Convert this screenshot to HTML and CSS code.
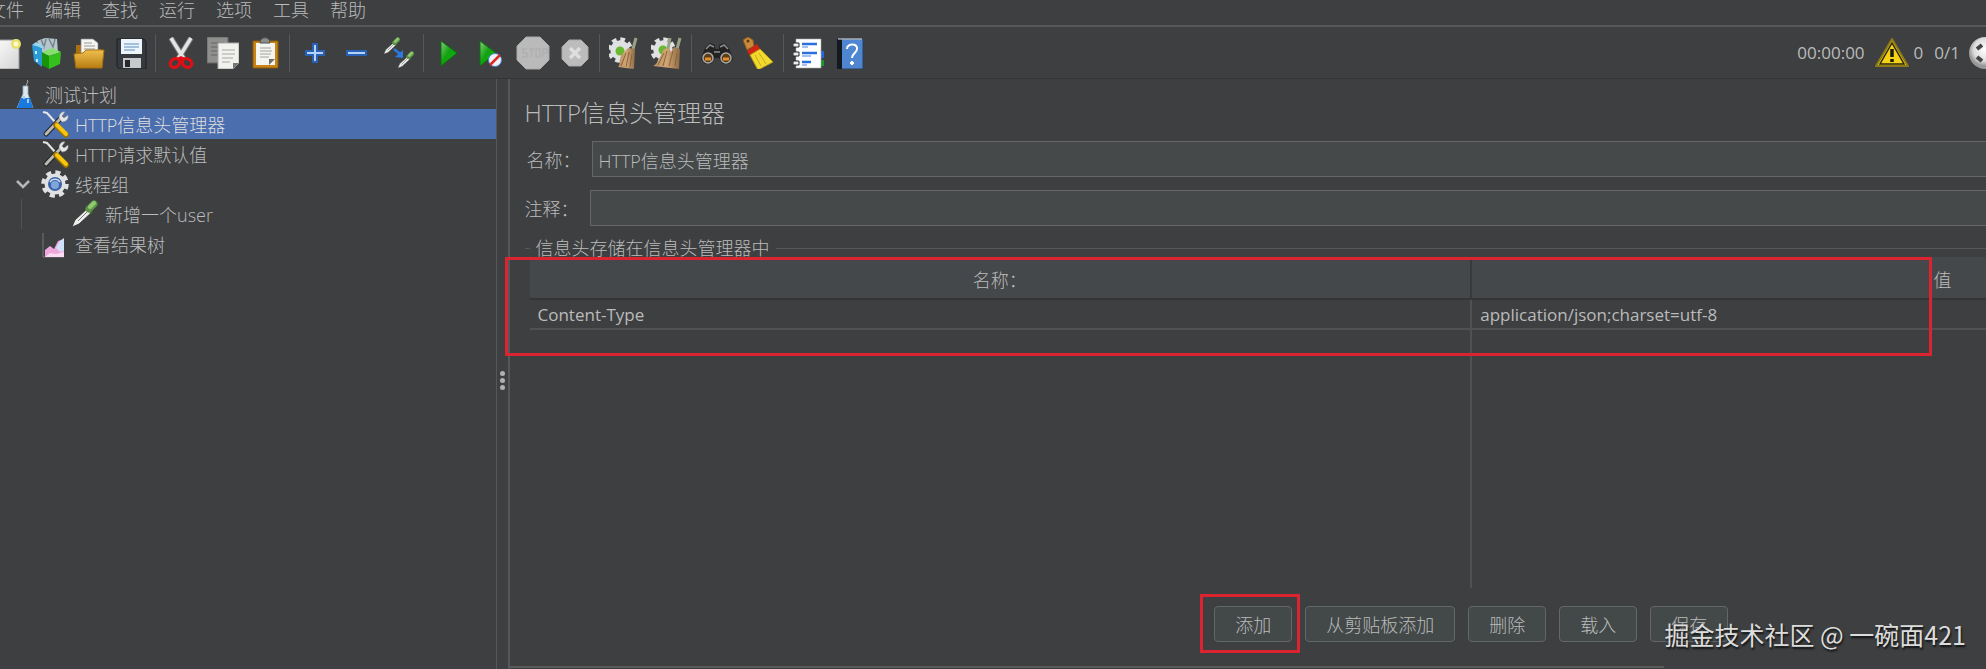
FILE: index.html
```html
<!DOCTYPE html>
<html lang="zh-CN">
<head>
<meta charset="utf-8">
<title>HTTP信息头管理器</title>
<link rel="stylesheet" href="styles.css">
</head>
<body>
<svg class="defs" aria-hidden="true">
  <defs>
    <linearGradient id="paper" x1="0" y1="0" x2="1" y2="1"><stop offset="0" stop-color="#fff"/><stop offset="1" stop-color="#d4d4d4"/></linearGradient>
    <linearGradient id="folder" x1="0" y1="0" x2="0" y2="1"><stop offset="0" stop-color="#efc04e"/><stop offset="1" stop-color="#b87d12"/></linearGradient>
    <linearGradient id="green" x1="0" y1="0" x2="1" y2="1"><stop offset="0" stop-color="#8ad07a"/><stop offset=".45" stop-color="#12a112"/><stop offset="1" stop-color="#05c005"/></linearGradient>
    <linearGradient id="broom" x1="0" y1="0" x2="1" y2="0"><stop offset="0" stop-color="#b98f62"/><stop offset=".5" stop-color="#d0a676"/><stop offset="1" stop-color="#8e6a45"/></linearGradient>
    <radialGradient id="ball" cx=".5" cy=".4"><stop offset="0" stop-color="#fff"/><stop offset=".7" stop-color="#ddd"/><stop offset="1" stop-color="#999"/></radialGradient>
    <symbol id="tools" viewBox="0 0 28 28">
      <path d="M2 2l4 1 9 10" fill="none" stroke="#e4e4e4" stroke-width="2"/>
      <path d="M20 8L5 24" stroke="#222" stroke-width="5" stroke-linecap="round"/>
      <path d="M20 8L5 24" stroke="#b9b9b4" stroke-width="3" stroke-linecap="round"/>
      <path d="M18 8c0-4 3-7 6-6l-3 4 2 2 4-3c1 4-2 7-6 7z" fill="#e6e6e6" stroke="#888" stroke-width=".6"/>
      <path d="M15 15l10 10" stroke="#9c7200" stroke-width="5.500" stroke-linecap="round"/>
      <path d="M16 15l9 9" stroke="#f9c40e" stroke-width="4" stroke-linecap="round"/>
    </symbol>
    <symbol id="cog" viewBox="0 0 28 28">
      <circle cx="14" cy="14" r="11.5" fill="none" stroke="#dfe1e3" stroke-width="4.5" stroke-dasharray="5 4.03"/>
      <circle cx="14" cy="14" r="10.5" fill="#dfe1e3"/>
    </symbol>
    <symbol id="dropper" viewBox="0 0 28 28">
      <path d="M1 27l3-7L17 8l4 4L8 24z" fill="#ecefea" stroke="#333" stroke-width=".8"/>
      <path d="M7 21L18 10" stroke="#778" stroke-width="1"/>
      <path d="M15 7l6 6" stroke="#40633a" stroke-width="2.5"/>
      <path d="M18 9l5-5" stroke="#5c9445" stroke-width="7" stroke-linecap="round"/>
      <path d="M19 7l4-4" stroke="#8fc972" stroke-width="4" stroke-linecap="round"/>
    </symbol>
  </defs>
</svg>

<div class="app">
  <nav class="menubar">
    <button>文件</button><button>编辑</button><button>查找</button><button>运行</button><button>选项</button><button>工具</button><button>帮助</button>
  </nav>

  <header class="toolbar">
    <div class="tools">
      <button aria-label="新建"><svg viewBox="0 0 32 32"><path d="M1 3h29v29H1z" fill="url(#paper)" stroke="#999"/><circle cx="27" cy="7" r="5" fill="#e8df6a"/><circle cx="27" cy="7" r="2.5" fill="#fffbc8"/></svg></button>
      <button aria-label="模板"><svg viewBox="0 0 32 32"><path d="M6 4l8-3 12 1 1 14-15 3z" fill="#b7c6cd"/><path d="M10 2l3 8 2-8M18 2l4 8 2-8" stroke="#75858c" fill="none" stroke-width="1.5"/><path d="M1 8l10 3v19L3 24z" fill="#2a9ad8"/><path d="M1 8l4-3 9 5-3 1z" fill="#92d5f2"/><path d="M11 15l10-4 9 4-12 4z" fill="#86e070"/><path d="M11 15l7 4v13l-7-4z" fill="#18940a"/><path d="M18 19l12-4-1 12-11 5z" fill="#35c01d"/><path d="M5 14v3M6 22v3" stroke="#c8eefa" stroke-width="2"/></svg></button>
      <button aria-label="打开"><svg viewBox="0 0 32 32"><path d="M3 8h8l3 4h14v18H3z" fill="#a96f0c"/><path d="M8 2h12l5 4v13H8z" fill="#f4f4f0" stroke="#888" stroke-width=".7"/><path d="M11 6h8M11 9h11M11 12h11" stroke="#999"/><path d="M1 17l9-1 3-3h18l-2 18H3z" fill="url(#folder)" stroke="#a9720d"/></svg></button>
      <button aria-label="保存"><svg viewBox="0 0 32 32"><path d="M2 2h27l2 3v27H4l-2-3z" fill="#343a40" stroke="#1d2023"/><path d="M6 2h21v15H6z" fill="#eef5fa"/><path d="M9 7h15M9 10h15M9 13h11" stroke="#89b0d4" stroke-width="1.3"/><path d="M8 21h18v10H8z" fill="#c7c9ca"/><path d="M10 23h5v7h-5z" fill="#26292c"/></svg></button>
      <span class="sep"></span>
      <button aria-label="剪切"><svg viewBox="0 0 32 32"><path d="M6 1l13 21M26 1L13 22" stroke="#777" stroke-width="5.5"/><path d="M6 1l13 21M26 1L13 22" stroke="#e4e4e4" stroke-width="3.5"/><ellipse cx="10" cy="26" rx="5" ry="4" fill="none" stroke="#dc1016" stroke-width="3.3" transform="rotate(-35 10 26)"/><ellipse cx="22" cy="26" rx="5" ry="4" fill="none" stroke="#dc1016" stroke-width="3.3" transform="rotate(35 22 26)"/><path d="M12 21l4-2 4 2-4 3z" fill="#dc1016"/></svg></button>
      <button aria-label="复制"><svg viewBox="0 0 32 32"><path d="M0 0h21v26H0z" fill="#8f908d" stroke="#666"/><path d="M4 6h13M4 10h13M4 14h7M4 18h7" stroke="#666"/><path d="M11 6h21v20l-6 6H11z" fill="#f1f1ee" stroke="#aaa"/><path d="M15 13h13M15 17h13M15 21h11M15 25h8" stroke="#a6a6a4"/><path d="M26 32v-6h6z" fill="#777"/></svg></button>
      <button aria-label="粘贴"><svg viewBox="0 0 32 32"><path d="M4 4h25v27H4z" fill="#c98416" stroke="#8c5a0d"/><path d="M7 6h19v22H7z" fill="#f4f4f0"/><path d="M11 6c0-7 10-7 10 0z" fill="#8a8d88" stroke="#555"/><path d="M11 11h11M11 14h12M11 17h11M11 20h9" stroke="#a2a2a0"/><path d="M20 28v-6h6z" fill="#6f6f6d"/></svg></button>
      <span class="sep"></span>
      <button aria-label="展开"><svg viewBox="0 0 32 32"><path d="M14 7h4v7h7v4h-7v7h-4v-7H7v-4h7z" fill="#b3d4f8" stroke="#2861b4" stroke-width="2"/></svg></button>
      <button aria-label="折叠"><svg viewBox="0 0 32 32"><path d="M6 14h19v4H6z" fill="#b3d4f8" stroke="#2861b4" stroke-width="2"/></svg></button>
      <button aria-label="切换"><svg viewBox="0 0 32 32"><use href="#dropper" x="0" y="0" width="18" height="18"/><use href="#dropper" x="14" y="14" width="18" height="18"/><path d="M11 12l6 5" stroke="#2c7be0" stroke-width="2.500"/><path d="M20 13v8l-8-1z" fill="#2c7be0"/></svg></button>
      <span class="sep"></span>
      <button aria-label="启动"><svg viewBox="0 0 32 32"><path d="M8 4l16 12L8 29z" fill="url(#green)" stroke="#0b700b"/></svg></button>
      <button aria-label="不停顿开始"><svg viewBox="0 0 32 32"><path d="M5 4l16 12L5 29z" fill="url(#green)" stroke="#0b700b"/><circle cx="20" cy="23" r="6.500" fill="#eef3fb" stroke="#4c80c4"/><path d="M15 28l10-10" stroke="#dc2a20" stroke-width="2.500"/></svg></button>
      <button aria-label="停止"><svg class="big" viewBox="0 0 34 34"><path d="M10 1h14l9 9v14l-9 9H10l-9-9V10z" fill="#bababa" stroke="#a8a8a8"/><path d="M11 13H7v4h4v4H6M13 13h5M15.500 13v8M20 13h4v8h-4zM27 21v-8h4v4h-4" fill="none" stroke="#b0b0b0" stroke-width="1.500"/></svg></button>
      <button aria-label="关闭"><svg viewBox="0 0 32 32"><path d="M10 3h12l7 7v12l-7 7H10l-7-7V10z" fill="#bcbcbc" stroke="#aaa"/><path d="M11 11l10 10M21 11L11 21" stroke="#dedede" stroke-width="3.500"/></svg></button>
      <span class="sep"></span>
      <button aria-label="清除"><svg viewBox="0 0 32 32"><use href="#cog" x="-2" y="0" width="26" height="26"/><circle cx="11" cy="14" r="4.500" fill="#69b930"/><path d="M27 1l-3 11" stroke="#9aa285" stroke-width="3"/><path d="M19 11l7 1-1 20-16-2c3-3 1-9 4-13z" fill="url(#broom)"/><path d="M12 29l5-13M17 30l3-15M21 30l2-13" stroke="#8a6439"/></svg></button>
      <button aria-label="清除全部"><svg viewBox="0 0 32 32"><use href="#cog" x="-1" y="0" width="26" height="26"/><circle cx="12" cy="13" r="4.500" fill="#69b930"/><path d="M19 1l-2 11M29 1l-3 11" stroke="#9aa285" stroke-width="3"/><path d="M13 12l5-1 2 4 3-5 6 2-1 20-26-3c5-2 6-8 11-17z" fill="url(#broom)"/><path d="M7 28l6-12M12 29l4-15M18 29l4-15M24 29l2-13" stroke="#8a6439"/></svg></button>
      <span class="sep"></span>
      <button aria-label="查找"><svg viewBox="0 0 32 32"><path d="M4 11l5-5 5 2v4h4V8l5-2 5 5 4 11-4 5h-6l-4-6h-4l-4 6H4l-4-5z" fill="#222"/><path d="M5 12l4-4 4 2M27 12l-4-4-4 2M13 15h6" fill="none" stroke="#8b8b8b" stroke-width="1.500"/><circle cx="7" cy="21" r="5" fill="#5c3b15" stroke="#aaa" stroke-width="1.500"/><circle cx="25" cy="21" r="5" fill="#5c3b15" stroke="#aaa" stroke-width="1.500"/><path d="M4 22h6M22 22h6" stroke="#e18f2c" stroke-width="3"/></svg></button>
      <button aria-label="重置搜索"><svg viewBox="0 0 32 32"><path d="M0 3l5-3 5 3 1 6-7 4z" fill="#c68a3c" stroke="#8f5c19"/><circle cx="5" cy="4" r="1.500" fill="#5e3b0e"/><path d="M4 14l10-7 3 5-10 7z" fill="#d22314"/><path d="M7 18l10-6 13 13-15 8z" fill="#f2d92f" stroke="#b89a10"/><path d="M12 18l6 11M16 16l7 11" stroke="#c9aa13"/></svg></button>
      <span class="sep"></span>
      <button aria-label="函数助手"><svg viewBox="0 0 32 32"><path d="M26 14h5v7h-5z" fill="#2467dc"/><path d="M26 23h5v6h-5z" fill="#149928"/><path d="M3 2h25v29H3z" fill="#fff" stroke="#aaa" stroke-width=".6"/><path d="M9 7h15M9 16h15M9 25h9" stroke="#2a70dc" stroke-width="2.500"/><path d="M9 10h6M9 19h9M9 28h5" stroke="#85aeea" stroke-width="1.500"/><path d="M0 6h6v4H0zM0 15h6v4H0zM0 24h6v4H0z" fill="#eee" stroke="#222"/></svg></button>
      <button aria-label="帮助"><svg viewBox="0 0 32 32"><path d="M2 2h26v30H2z" fill="#4f86d2" stroke="#27415f"/><path d="M2 2h5v30H2z" fill="#15181c"/><path d="M3 2h24" stroke="#e5e5e5"/><path d="M12 12c0-6 11-6 10 0 0 4-5 4-5 9M17 24v4M15 26h4" fill="none" stroke="#fff" stroke-width="2"/></svg></button>
    </div>
    <div class="status">
      <span class="time">00:00:00</span>
      <svg class="warn" viewBox="0 0 34 32" role="img" aria-label="警告"><path d="M17 2L1 29h32z" fill="#f1cf12" stroke="#8c7b16" stroke-width="2" stroke-linejoin="round"/><path d="M17 6L5 27h24z" fill="#f5d314" stroke="#2b2712" stroke-width="1.500"/><path d="M17 12v8M17 22v3" stroke="#1c1a0c" stroke-width="3.500"/></svg>
      <span class="errors">0</span>
      <span class="threads">0/1</span>
      <svg class="remote" viewBox="0 0 32 32" role="img" aria-label="远程"><circle cx="16" cy="16" r="16" fill="url(#ball)"/><path d="M8 12l5-4M8 20l5 4" stroke="#444" stroke-width="4"/></svg>
    </div>
  </header>

  <div class="body">
    <aside class="tree">
      <div class="node"><svg viewBox="0 0 28 28"><path d="M16 0l1 1-2 5" stroke="#aaa" fill="none"/><path d="M12 6h5v8l5 14H6l6-14z" fill="#dbe6ee" stroke="#9badb9" stroke-width=".8"/><path d="M10 18h9l3 10H6z" fill="#1a79de"/><path d="M13 16v3M17 19v4" stroke="#9cd0fa" stroke-width="2"/></svg><span>测试计划</span></div>
      <div class="node child selected"><svg><use href="#tools"/></svg><span>HTTP信息头管理器</span></div>
      <div class="node child"><svg><use href="#tools"/></svg><span>HTTP请求默认值</span></div>
      <div class="node child parent"><svg class="chevron" viewBox="0 0 14 14"><path d="M1 4l6 6 6-6" fill="none" stroke="#b4b8ba" stroke-width="2.500"/></svg><svg viewBox="0 0 28 28"><use href="#cog"/><circle cx="14" cy="14" r="7" fill="#3a62a8"/><circle cx="14" cy="15" r="4" fill="#7fa6da"/><path d="M9 12a6 6 0 0 1 10 0" stroke="#c7daf2" fill="none" stroke-width="1.500"/></svg><span>线程组</span></div>
      <div class="branch"><div class="node"><svg><use href="#dropper"/></svg><span>新增一个user</span></div></div>
      <div class="node child"><svg viewBox="0 0 28 28"><path d="M2 3v24h21" stroke="#777" fill="none"/><path d="M4 27V20l5-4 4 3 4-8 6-2v18z" fill="#f0a8dc"/><path d="M15 18l4-7 4-3v13l-4 1z" fill="#cfe2fa"/><path d="M4 27l5-4 6 1 8-2v5z" fill="#fbdcf1"/></svg><span>查看结果树</span></div>
    </aside>
    <div class="splitter"><i></i><i></i><i></i></div>

    <main class="main">
      <div class="viewport">
        <div class="panel">
          <h1>HTTP信息头管理器</h1>
          <div class="field name"><label for="name">名称：</label><input id="name" type="text" value="HTTP信息头管理器"></div>
          <div class="field"><label for="comment">注释：</label><input id="comment" type="text"></div>
          <fieldset>
            <legend>信息头存储在信息头管理器中</legend>
            <div class="grid">
              <table>
                <thead><tr><th>名称：</th><th>值</th></tr></thead>
                <tbody><tr><td>Content-Type</td><td>application/json;charset=utf-8</td></tr></tbody>
              </table>
              <div class="rest"><span></span><span></span></div>
            </div>
          </fieldset>
          <div class="actions">
            <button class="marked">添加</button><button>从剪贴板添加</button><button>删除</button><button>载入</button><button>保存</button>
          </div>
          <div class="baseline"></div>
        </div>
      </div>
      <div class="mark"></div>
      <div class="watermark">掘金技术社区 @ 一碗面421</div>
    </main>
  </div>
</div>
</body>
</html>
```

FILE: styles.css
```css
* { box-sizing: border-box; }

body {
  margin: 0;
  background: #3d3f41;
  color: #bbb;
  font: 300 18px/24px "Open Sans", "Noto Sans CJK SC", sans-serif;
}

.defs { position: absolute; width: 0; height: 0; }

button, input { font: inherit; color: inherit; }
svg { display: block; flex: none; }

.app {
  display: flex;
  flex-direction: column;
  height: 100vh;
  overflow: hidden;
}

.menubar {
  display: flex;
  flex: none;
  align-items: flex-start;
  gap: 21px;
  height: 27px;
  margin-left: -12px;
  border-bottom: 2px solid #555759;
}
.menubar button {
  padding: 0;
  border: 0;
  background: none;
  line-height: 20px;
  white-space: nowrap;
}

.toolbar {
  display: flex;
  flex: none;
  justify-content: space-between;
  height: 52px;
  border-bottom: 1px solid #333537;
}
.tools {
  display: flex;
  align-items: center;
  margin-left: -16px;
}
.tools button {
  display: grid;
  place-items: center;
  width: 42px;
  height: 42px;
  padding: 0;
  border: 0;
  background: none;
}
.tools svg { width: 32px; height: 32px; }
.tools .big { width: 34px; height: 34px; }
.sep {
  width: 1px;
  height: 38px;
  margin: 0 4px 0 3px;
  background: #56585a;
}

.status {
  display: flex;
  align-items: center;
  margin-right: -15px;
}
.status .warn { width: 34px; height: 32px; margin: 0 5px 0 10px; }
.status .threads { margin: 0 9px 0 11px; }
.status .remote { width: 32px; height: 32px; }
.status span { padding-top: 1px; font-size: 17px; font-weight: 400; }

.body { display: flex; flex: 1; min-height: 0; }

.tree {
  flex: none;
  width: 25%;
  min-width: 240px;
  border-right: 1px solid #55585a;
}
.node {
  display: flex;
  align-items: center;
  gap: 6px;
  height: 30px;
  padding-left: 11px;
  white-space: nowrap;
}
.node svg { width: 28px; height: 28px; }
.node span { padding-top: 2px; }
.child { padding-left: 41px; }
.parent { padding-left: 16px; gap: 6px; }
.parent .chevron { width: 14px; height: 14px; margin-right: 5px; }
.selected { background: #4b6eaf; color: #ddd; }
.branch { margin-left: 21px; border-left: 1px solid #505254; }
.branch .node { padding-left: 49px; }

.splitter {
  display: flex;
  flex: none;
  flex-direction: column;
  align-items: center;
  justify-content: center;
  gap: 2px;
  width: 13px;
  padding-top: 12px;
  border-right: 2px solid #55585a;
}
.splitter i {
  width: 5px;
  height: 5px;
  border-radius: 50%;
  background: #afb1b3;
}

.main { position: relative; flex: 1; min-width: 0; }
.viewport { height: 100%; overflow: hidden; }
.panel {
  display: flex;
  flex-direction: column;
  width: 130%;
  height: 100%;
  padding: 16px 11px 0 15px;
}

h1 {
  margin: 0 0 10px;
  font-size: 24px;
  font-weight: 300;
  line-height: 36px;
}

.field {
  display: flex;
  align-items: center;
  gap: 11px;
  margin-bottom: 13px;
}
.name { padding-left: 2px; }
.field label { padding-top: 2px; }
.field input {
  flex: 1;
  height: 36px;
  padding: 1px 6px 0;
  border: 1px solid #646667;
  background: #45494a;
  outline: 0;
}

fieldset {
  display: flex;
  flex: 1;
  flex-direction: column;
  min-width: 0;
  margin: 0;
  padding: 0 5px;
  border: 0 solid #55585a;
  border-top-width: 1px;
}
legend {
  padding: 0 6px;
  line-height: 18px;
}
.grid { display: flex; flex: 1; flex-direction: column; }

table {
  width: 100%;
  table-layout: fixed;
  border-collapse: collapse;
}
th {
  height: 42px;
  padding: 5px 0 0;
  border-bottom: 2px solid #333537;
  background: #45484a;
  font-weight: 300;
}
th + th { border-left: 2px solid #37393b; }
td {
  height: 30px;
  padding: 1px 8px 0;
  border-bottom: 2px solid #4f5153;
  font-weight: 400;
  font-size: 17px;
}
td + td { border-left: 2px solid #4f5153; }
.rest { display: grid; flex: 1; grid-template-columns: 1fr 1fr; }
.rest span + span { margin-left: -1px; border-left: 2px solid #4f5153; }

.actions {
  display: flex;
  justify-content: center;
  gap: 13px;
  padding: 18px 0 24px;
}
.actions button {
  position: relative;
  height: 36px;
  padding: 1px 20px 0;
  border: 1px solid #646768;
  border-radius: 4px;
  background: #434949;
  white-space: nowrap;
}
.marked::after {
  content: "";
  position: absolute;
  inset: -13px -9px -12px -15px;
  border: 3px solid #dc2430;
}
.baseline { width: 61%; height: 3px; margin-left: -15px; border-top: 2px solid #5a5a5a; }

.mark {
  position: absolute;
  top: 178px;
  right: 54px;
  left: -5px;
  height: 99px;
  border: 3px solid #dc2430;
}
.watermark {
  position: absolute;
  right: 20px;
  bottom: 17px;
  color: #dcdcdc;
  font-size: 25px;
  font-weight: 400;
  line-height: 36px;
  text-shadow: 1px 2px 2px #111;
  font-family: "Noto Sans CJK SC", sans-serif;
}
```
